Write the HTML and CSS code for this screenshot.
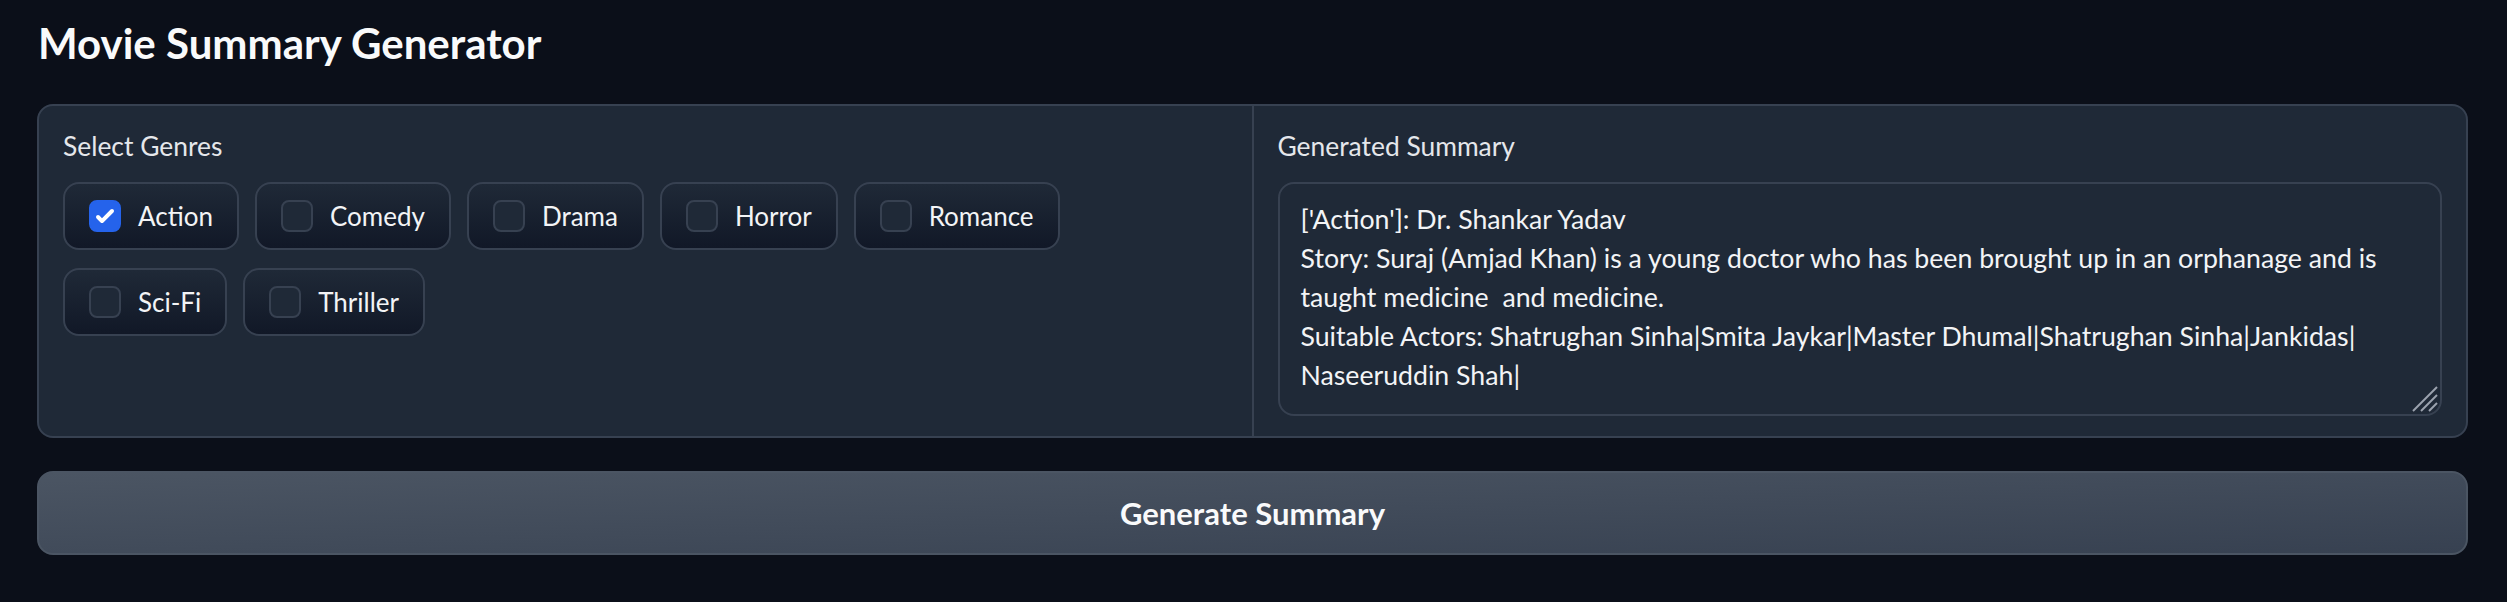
FILE: index.html
```html
<!DOCTYPE html>
<html lang="en">
<head>
<meta charset="utf-8">
<title>Movie Summary Generator</title>
<link rel="stylesheet" href="styles.css">
</head>
<body>
<div class="app">
  <h1 class="title">Movie Summary Generator</h1>
  <div class="panel">
    <div class="col">
      <div class="block-label">Select Genres</div>
      <div class="choices">
        <label class="choice"><span class="box checked"><svg viewBox="0 0 16 16" width="32" height="32"><path fill="#fff" d="M12.207 4.793a1 1 0 010 1.414l-5 5a1 1 0 01-1.414 0l-2-2a1 1 0 011.414-1.414L6.5 9.086l4.293-4.293a1 1 0 011.414 0z"/></svg></span><span class="choice-text">Action</span></label>
        <label class="choice"><span class="box"></span><span class="choice-text">Comedy</span></label>
        <label class="choice"><span class="box"></span><span class="choice-text">Drama</span></label>
        <label class="choice"><span class="box"></span><span class="choice-text">Horror</span></label>
        <label class="choice"><span class="box"></span><span class="choice-text">Romance</span></label>
        <label class="choice"><span class="box"></span><span class="choice-text">Sci-Fi</span></label>
        <label class="choice"><span class="box"></span><span class="choice-text">Thriller</span></label>
      </div>
    </div>
    <div class="col col-right">
      <div class="block-label">Generated Summary</div>
      <div class="textarea"><div class="textarea-text">['Action']: Dr. Shankar Yadav
Story: Suraj (Amjad Khan) is a young doctor who has been brought up in an orphanage and is
taught medicine  and medicine.
Suitable Actors: Shatrughan Sinha|Smita Jaykar|Master Dhumal|Shatrughan Sinha|Jankidas|
Naseeruddin Shah|</div><svg class="resizer" viewBox="0 0 28 28" width="28" height="28"><path d="M3 27 L27 3" stroke="#9ca3af" stroke-width="2"/><path d="M11 27 L27 11" stroke="#9ca3af" stroke-width="2"/><path d="M19 27 L27 19" stroke="#9ca3af" stroke-width="2"/></svg></div>
    </div>
  </div>
  <button class="generate" type="button">Generate Summary</button>
</div>
</body>
</html>
```

FILE: styles.css
```css
html, body {
  margin: 0;
  padding: 0;
  background: #0b0f19;
}

body {
  font-family: Lato, "Liberation Sans", sans-serif;
  color: #f3f4f6;
}

.app {
  padding: 18px 39px 0 37px;
}

.title {
  margin: 0 0 36px 1px;
  font-size: 42px;
  line-height: 50px;
  font-weight: 700;
  color: #f9fafb;
}

.panel {
  display: flex;
  border: 2px solid #374151;
  border-radius: 16px;
  background: #1f2937;
  overflow: hidden;
}

.col {
  flex: 1 1 0;
  min-width: 0;
  padding: 20px 24px 20px 24px;
}

.col-right {
  border-left: 2px solid #374151;
}

.block-label {
  font-size: 26.4px;
  line-height: 40px;
  margin: 0 0 16px 0;
  color: #e5e7eb;
}

.choices {
  display: flex;
  flex-wrap: wrap;
  gap: 18px 16px;
}

.choice {
  display: flex;
  align-items: center;
  padding: 16px 24px;
  border: 2px solid #374151;
  border-radius: 16px;
  background: linear-gradient(to top, #111827, #1f2937);
  font-size: 26px;
  line-height: 32px;
  color: #f3f4f6;
}

.box {
  width: 32px;
  height: 32px;
  box-sizing: border-box;
  border: 2px solid #374151;
  border-radius: 8px;
  background: #1f2937;
  display: flex;
  flex: none;
}

.box.checked {
  background: #2563eb;
  border-color: #2563eb;
  align-items: center;
  justify-content: center;
}

.box.checked svg {
  flex: none;
}

.choice-text {
  margin-left: 17px;
}

.textarea {
  position: relative;
  height: 234px;
  box-sizing: border-box;
  border: 2px solid #374151;
  border-radius: 16px;
  background: #1f2937;
  padding: 16px 20px 19px 21px;
}

.textarea-text {
  white-space: pre-wrap;
  font-size: 26.7px;
  line-height: 39px;
  color: #f3f4f6;
}

.resizer {
  position: absolute;
  right: 2px;
  bottom: 2px;
}

.generate {
  display: block;
  width: 100%;
  margin-top: 33px;
  height: 84px;
  box-sizing: border-box;
  border: 2px solid #4b5563;
  border-radius: 16px;
  background: linear-gradient(to bottom right, #4b5563, #374151);
  font-family: Lato, "Liberation Sans", sans-serif;
  font-size: 31px;
  font-weight: 700;
  color: #f9fafb;
  padding: 0;
}
```
